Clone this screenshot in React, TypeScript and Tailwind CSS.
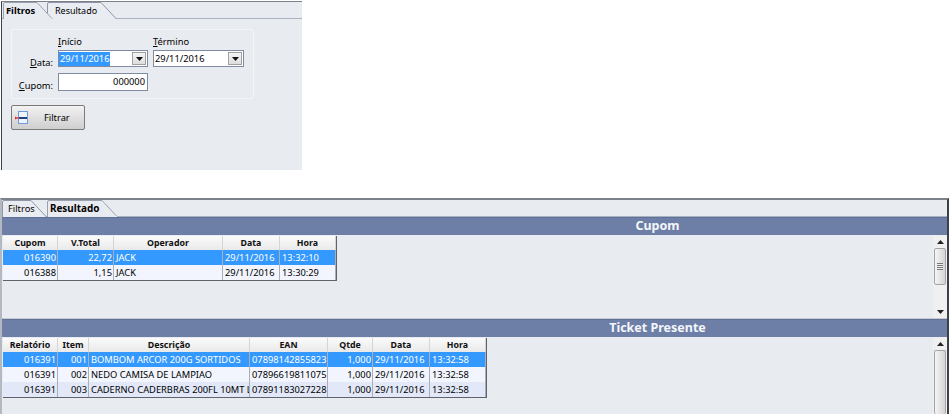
import type { ReactNode } from "react"

const font = "font-['Noto_Sans',Arial,sans-serif]"

function Tab({ label, active, box, width, textClass }: { label: string; active?: boolean; box: string; width: number; textClass: string }) {
  return (
    <div className={`relative -mb-px h-[17px] flex-none ${box} ${active ? "z-10" : ""}`}>
      <svg className="absolute left-0 top-0" width={width} height="17" viewBox={`0 0 ${width} 17`}>
        <path
          d={`M0.5 17 V2 Q0.5 0.5 2 0.5 H${width - 16} L${width - 0.5} 17`}
          fill={active ? "#e8ebf0" : "#e9ecf1"}
          stroke={active ? "#9aa2b2" : "#8f97a6"}
        />
        {active && <rect x="1" y="16" width={width - 2} height="1" fill="#e8ebf0" />}
      </svg>
      <span className={`relative block pt-[2px] leading-[13px] text-black ${textClass} ${active ? "font-bold" : ""}`}>
        {label}
      </span>
    </div>
  )
}

function DateCombo({ value, selected }: { value: string; selected?: boolean }) {
  return (
    <div className="flex h-[17px] items-center border border-[#7f8aa3] bg-white pr-[1px]">
      <span className={`flex-none px-[1px] text-[9.3px] leading-[14px] ${selected ? "bg-[#3399ff] text-white" : "text-black"}`}>
        {value}
      </span>
      <span className="ml-auto flex h-[13px] w-[14px] items-center justify-center border border-[#a0a0a0] bg-gradient-to-b from-[#f4f4f4] to-[#dedede]">
        <svg width="7" height="4" viewBox="0 0 7 4">
          <path d="M0 0H7L3.5 4Z" fill="#111" />
        </svg>
      </span>
    </div>
  )
}

function FilterIcon() {
  return (
    <svg width="13" height="14" viewBox="0 0 13 14">
      <rect x="3.5" y="0.5" width="9" height="12" fill="#eef4fc" stroke="#6f9bd8" />
      <rect x="4" y="6" width="8" height="2" fill="#24407e" />
      <path d="M0 5.5 L3 7 L0 8.5Z" fill="#e0242c" />
      <rect x="2" y="6.5" width="2" height="1" fill="#e0242c" />
    </svg>
  )
}

function FiltersWindow() {
  return (
    <div className="ml-px mt-px h-[169px] w-[301px] flex-none border-l border-t border-l-[#3c4148] border-t-[#7d828a] bg-[#e8ebf0]">
      <div className="flex h-[17px] border-b border-[#a9b2c3] pl-px">
        <Tab label="Filtros" active box="w-[44px]" width={50} textClass="pl-[3px] text-[9.3px]" />
        <Tab label="Resultado" box="w-[70px]" width={70} textClass="pl-[8px] text-[9px]" />
      </div>
      <div className="ml-[9px] mt-[10px] h-[70px] w-[243px] rounded-[2px] border border-[#f4f5f8] pt-[5px]">
        <div className="grid grid-cols-[41px_90px_91px] gap-x-[5px] text-[9.3px] text-black">
          <span />
          <span className="leading-[13px]"><u>I</u>nício</span>
          <span className="leading-[13px]"><u>T</u>érmino</span>
          <span className="-mb-[2px] mt-[2px] self-end text-right leading-[13px]"><u>D</u>ata:</span>
          <div className="mt-[2px]"><DateCombo value="29/11/2016" selected /></div>
          <div className="mt-[2px]"><DateCombo value="29/11/2016" /></div>
          <span className="-mb-[1px] mt-[6px] self-end text-right leading-[13px]"><u>C</u>upom:</span>
          <div className="mt-[6px] flex h-[18px] items-center justify-end border border-[#7f8aa3] bg-white pr-[2px]">
            000000
          </div>
        </div>
      </div>
      <div className="ml-[9px] mt-[6px] flex h-[25px] w-[74px] items-center rounded-[2px] border border-[#7b7b7b] bg-gradient-to-b from-[#f2f2f2] to-[#cfcfcf] pl-[3px] text-[9.3px] text-black">
        <FilterIcon />
        <span className="ml-[16px]">Filtrar</span>
      </div>
    </div>
  )
}

function SectionBar({ title }: { title: string }) {
  return (
    <div className="flex h-[18px] flex-none items-center justify-center border-t border-[#5f7197] bg-[#6d7fa6] pl-[366px] text-[12.5px] font-bold text-[#f4f6fa]">
      {title}
    </div>
  )
}

function Scrollbar({ thumb }: { thumb: boolean }) {
  return (
    <div className="flex w-[14px] flex-none flex-col items-center bg-[#f0f0f0]">
      <svg className="mt-[4px] flex-none" width="7" height="4" viewBox="0 0 7 4">
        <path d="M0 4H7L3.5 0Z" fill="#222" />
      </svg>
      <div className={`mt-[4px] flex w-[12px] items-center justify-center rounded-[2px] border border-[#a4a4a4] bg-gradient-to-r from-[#f5f5f5] to-[#d4d4d4] ${thumb ? "h-[37px]" : "flex-1 border-b-0"}`}>
        {thumb && <div className="h-[7px] w-[6px] bg-[repeating-linear-gradient(#777_0_1px,#eee_1px_2px)]" />}
      </div>
      {thumb && (
        <svg className="mb-[4px] mt-auto flex-none" width="7" height="4" viewBox="0 0 7 4">
          <path d="M0 0H7L3.5 4Z" fill="#222" />
        </svg>
      )}
    </div>
  )
}

type Col = { title: string; width: string; align?: "right" }

function Cell({ col, children, selected }: { col: Col; children: ReactNode; selected: boolean }) {
  return (
    <div
      className={`${col.width} flex-none overflow-hidden whitespace-nowrap border-r border-[#a9aeb9] text-[9.3px] leading-[15px] ${col.align === "right" ? "pr-[1px] text-right" : "pl-[2px]"} ${selected ? "text-white" : "text-black"}`}
    >
      {children}
    </div>
  )
}

function DataGrid({ cols, rows, tint }: { cols: Col[]; rows: string[][]; tint?: boolean }) {
  return (
    <div className="w-fit self-start border-b border-r border-[#5f636b] bg-white">
      <div className="flex h-[14px] bg-gradient-to-b from-[#fbfbfb] to-[#e9e9e9]">
        {cols.map((col) => (
          <div
            key={col.title}
            className={`${col.width} flex-none border-r border-[#d5d5d5] text-center text-[8.8px] font-bold leading-[14px] text-[#111]`}
          >
            {col.title}
          </div>
        ))}
      </div>
      {rows.map((row, i) => (
        <div
          key={i}
          className={`flex h-[15px] ${i === 0 ? "bg-[#3399ff]" : i % 2 === 1 ? "bg-[#f2f5fd]" : tint ? "bg-[#e2e8f8]" : "bg-white"}`}
        >
          {row.map((value, j) => (
            <Cell key={j} col={cols[j]} selected={i === 0}>
              {value}
            </Cell>
          ))}
        </div>
      ))}
    </div>
  )
}

const cupomCols: Col[] = [
  { title: "Cupom", width: "w-[55px]", align: "right" },
  { title: "V.Total", width: "w-[56px]", align: "right" },
  { title: "Operador", width: "w-[109px]" },
  { title: "Data", width: "w-[57px]" },
  { title: "Hora", width: "w-[56px]" },
]

const cupomRows = [
  ["016390", "22,72", "JACK", "29/11/2016", "13:32:10"],
  ["016388", "1,15", "JACK", "29/11/2016", "13:30:29"],
]

const ticketCols: Col[] = [
  { title: "Relatório", width: "w-[55px]", align: "right" },
  { title: "Item", width: "w-[31px]", align: "right" },
  { title: "Descrição", width: "w-[161px]" },
  { title: "EAN", width: "w-[78px]" },
  { title: "Qtde", width: "w-[45px]", align: "right" },
  { title: "Data", width: "w-[57px]" },
  { title: "Hora", width: "w-[56px]" },
]

const ticketRows = [
  ["016391", "001", "BOMBOM ARCOR 200G SORTIDOS", "07898142855823", "1,000", "29/11/2016", "13:32:58"],
  ["016391", "002", "NEDO CAMISA DE LAMPIAO", "07896619811075", "1,000", "29/11/2016", "13:32:58"],
  ["016391", "003", "CADERNO CADERBRAS 200FL 10MT L", "07891183027228", "1,000", "29/11/2016", "13:32:58"],
]

function ResultWindow() {
  return (
    <div className="flex h-[216px] w-[949px] flex-col border-l-2 border-r-2 border-t-2 border-l-[#b4b8c0] border-r-[#3c4148] border-t-[#7d828a] bg-[#e8ebf0]">
      <div className="flex h-[17px] flex-none border-b border-[#a9b2c3]">
        <Tab label="Filtros" box="w-[45px]" width={45} textClass="pl-[6px] text-[9.3px]" />
        <Tab label="Resultado" active box="w-[71px]" width={71} textClass="pl-[3px] text-[9.9px]" />
      </div>
      <SectionBar title="Cupom" />
      <div className="flex h-[84px] flex-none justify-between border-b border-[#c5cad3] pl-px pt-px">
        <DataGrid cols={cupomCols} rows={cupomRows} />
        <Scrollbar thumb />
      </div>
      <SectionBar title="Ticket Presente" />
      <div className="flex min-h-0 flex-1 justify-between pl-px pt-px">
        <DataGrid cols={ticketCols} rows={ticketRows} tint />
        <Scrollbar thumb={false} />
      </div>
    </div>
  )
}

export default function App() {
  return (
    <div className={`${font} h-[419px] w-[952px] overflow-hidden bg-white`}>
      <FiltersWindow />
      <div className="mt-[28px]">
        <ResultWindow />
      </div>
    </div>
  )
}
